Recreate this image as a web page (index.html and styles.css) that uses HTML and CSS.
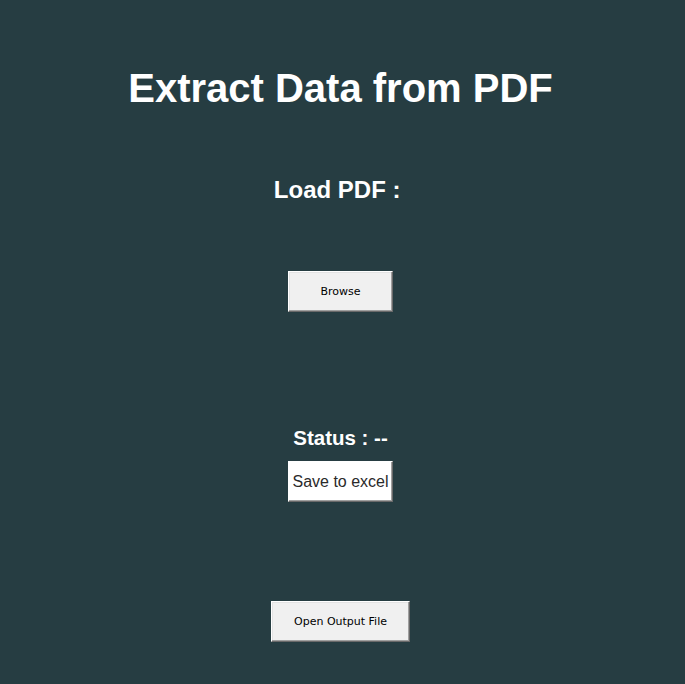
FILE: index.html
```html
<!DOCTYPE html>
<html>
<head>
<meta charset="utf-8">
<link rel="stylesheet" href="styles.css">
</head>
<body>
<div class="app">
  <h1 class="title">Extract Data from PDF</h1>
  <div class="label load-label">Load PDF :&nbsp;</div>
  <button class="btn btn-browse">Browse</button>
  <div class="label status-label">Status : --</div>
  <button class="btn-white">Save to excel</button>
  <button class="btn btn-open">Open Output File</button>
</div>
</body>
</html>
```
FILE: styles.css
```css
html, body {
  margin: 0;
  padding: 0;
  background: #263d42;
  height: 100%;
}
.app {
  width: 681px;
  height: 684px;
  display: flex;
  flex-direction: column;
  align-items: center;
  font-family: "Liberation Sans", Arial, sans-serif;
  color: #ffffff;
}
.title {
  margin: 64px 0 0 0;
  font-size: 40px;
  line-height: 48px;
  font-weight: bold;
}
.label {
  font-weight: bold;
}
.load-label {
  margin-top: 64px;
  font-size: 24px;
  line-height: 28px;
}
.status-label {
  margin-top: 114px;
  font-size: 20.5px;
  line-height: 24px;
}
.btn {
  box-sizing: border-box;
  height: 41px;
  background: #f0f0f0;
  border-style: solid;
  border-width: 1px;
  border-color: #ffffff #696969 #696969 #ffffff;
  box-shadow: inset -1px -1px 0 #a0a0a0, inset 1px 1px 0 #e3e3e3;
  font-family: "DejaVu Sans", "Liberation Sans", sans-serif;
  font-size: 11px;
  color: #000000;
  padding: 0;
}
.btn-browse {
  margin-top: 67px;
  width: 105px;
}
.btn-open {
  margin-top: 99px;
  width: 139px;
}
.btn-white {
  box-sizing: border-box;
  margin-top: 11px;
  width: 105px;
  height: 41px;
  background: #ffffff;
  border-style: solid;
  border-width: 1px;
  border-color: #ffffff #696969 #696969 #ffffff;
  box-shadow: inset -1px -1px 0 #a0a0a0;
  font-family: "Liberation Sans", Arial, sans-serif;
  font-size: 16px;
  color: #2a2a2a;
  padding: 0;
}
```
